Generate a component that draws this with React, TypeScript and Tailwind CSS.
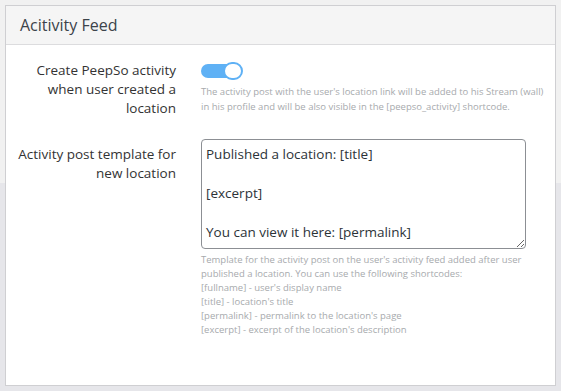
import React from "react";

const TEMPLATE = "Published a location: [title]\n\n[excerpt]\n\nYou can view it here: [permalink]";

const shortcodes = [
  "[fullname] - user's display name",
  "[title] - location's title",
  "[permalink] - permalink to the location's page",
  "[excerpt] - excerpt of the location's description",
];

function Toggle({ on }: { on: boolean }) {
  return (
    <div className="relative h-[18px] w-[42px]">
      <div className={`absolute left-0 top-[2px] h-[14px] w-[40px] rounded-full ${on ? "bg-[#5fb1f5]" : "bg-[#ccc]"}`} />
      <div className="absolute right-0 top-0 h-[18px] w-[20px] rounded-full border-2 border-[#5fb1f5] bg-white" />
    </div>
  );
}

export default function App() {
  return (
    <div
      className="h-[391px] w-full overflow-hidden bg-[linear-gradient(to_bottom,#f1f1f1_183px,#e6e6ea_183px)] pl-[5px] pt-[5px]"
      style={{ fontFamily: '"Open Sans", "Noto Sans", sans-serif' }}
    >
      <div className="flex h-[381px] w-[551px] flex-col border border-[#cfcfd2] bg-white">
        <div className="flex h-[39px] items-center border-b border-[#dcdcde] bg-[#f5f5f5] px-[14px]">
          <h2 className="text-[16px] text-[#3c434a]">Acitivity Feed</h2>
        </div>

        <div className="flex flex-col pt-[16px]">
          {/* toggle row */}
          <div className="flex gap-[25px]">
            <div className="w-[170px] text-right text-[13.5px] leading-[19px] text-[#333]">
              Create PeepSo activity when user created a location
            </div>
            <div className="flex w-[345px] flex-col pt-[1px]">
              <Toggle on />
              <p className="mt-[4px] text-[9.5px] leading-[15px] text-[#a7aaad]">
                The activity post with the user's location link will be added to his Stream (wall) in his profile and will be also visible in the [peepso_activity] shortcode.
              </p>
            </div>
          </div>

          {/* template row */}
          <div className="mt-[21px] flex gap-[25px]">
            <div className="w-[170px] pt-[6px] text-right text-[13.5px] leading-[19px] text-[#333]">
              Activity post template for new location
            </div>
            <div className="flex w-[345px] flex-col">
              <textarea
                defaultValue={TEMPLATE}
                className="h-[110px] w-[325px] rounded-[4px] border border-[#8c8f94] px-[4px] py-[5px] text-[13.5px] leading-[19.5px] text-[#2c3338] outline-none"
              />
              <div className="mt-[4px] w-[325px] text-[9.5px] leading-[14px] text-[#a7aaad]">
                <p>Template for the activity post on the user's activity feed added after user published a location. You can use the following shortcodes:</p>
                {shortcodes.map((s) => (
                  <p key={s}>{s}</p>
                ))}
              </div>
            </div>
          </div>
        </div>
      </div>
    </div>
  );
}
